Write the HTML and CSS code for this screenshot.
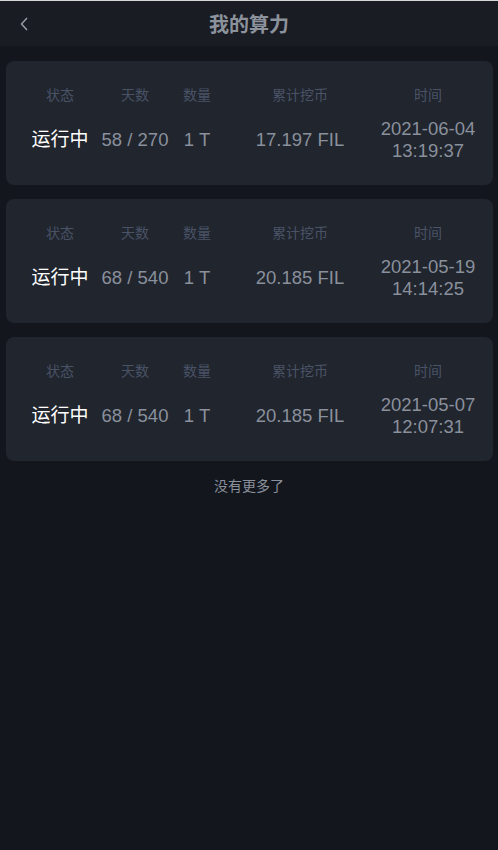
FILE: index.html
```html
<!DOCTYPE html>
<html lang="zh-CN">
<head>
  <meta charset="UTF-8">
  <meta name="viewport" content="width=device-width, initial-scale=1.0">
  <title>我的算力</title>
  <link rel="stylesheet" href="styles.css">
</head>
<body>

  <div class="header">
    <a class="back" href="#">
      <svg width="10" height="16" viewBox="0 0 10 16"><path d="M8 2 L2.5 8 L8 14" fill="none" stroke="#9aa0aa" stroke-width="1.4"/></svg>
    </a>
    <h1>我的算力</h1>
  </div>

  <div class="list">
    <div class="card">
      <div class="label">状态</div>
      <div class="label">天数</div>
      <div class="label">数量</div>
      <div class="label">累计挖币</div>
      <div class="label">时间</div>
      <div class="value status">运行中</div>
      <div class="value">58 / 270</div>
      <div class="value">1 T</div>
      <div class="value">17.197 FIL</div>
      <div class="value">2021-06-04<br>13:19:37</div>
    </div>

    <div class="card">
      <div class="label">状态</div>
      <div class="label">天数</div>
      <div class="label">数量</div>
      <div class="label">累计挖币</div>
      <div class="label">时间</div>
      <div class="value status">运行中</div>
      <div class="value">68 / 540</div>
      <div class="value">1 T</div>
      <div class="value">20.185 FIL</div>
      <div class="value">2021-05-19<br>14:14:25</div>
    </div>

    <div class="card">
      <div class="label">状态</div>
      <div class="label">天数</div>
      <div class="label">数量</div>
      <div class="label">累计挖币</div>
      <div class="label">时间</div>
      <div class="value status">运行中</div>
      <div class="value">68 / 540</div>
      <div class="value">1 T</div>
      <div class="value">20.185 FIL</div>
      <div class="value">2021-05-07<br>12:07:31</div>
    </div>
  </div>

  <p class="no-more">没有更多了</p>

</body>
</html>
```

FILE: styles.css
```css
body {
  margin: 0;
  min-height: 100vh;
  background-color: #13161d;
  font-family: "Liberation Sans", Arial, "Noto Sans CJK SC", sans-serif;
  border-top: 1px solid #d8d8d8;
  box-sizing: border-box;
}

.header {
  height: 45px;
  background-color: #1a1c24;
  display: flex;
  align-items: center;
  justify-content: center;
  position: relative;
}

.header h1 {
  margin: 0;
  font-size: 20px;
  font-weight: bold;
  color: #8c929c;
}

.back {
  position: absolute;
  left: 19px;
  top: 15px;
  display: block;
  line-height: 0;
}

.list {
  padding: 15px 5px 0 6px;
  display: flex;
  flex-direction: column;
  gap: 14px;
}

.card {
  background-color: #20252e;
  border-radius: 8px;
  padding: 24px 0 23px 16px;
  display: grid;
  grid-template-columns: 76px 74px 50px 156px 100px;
  row-gap: 13px;
  align-items: center;
  text-align: center;
}

.label {
  font-size: 14px;
  line-height: 20px;
  color: #4a5366;
}

.value {
  font-size: 18.5px;
  line-height: 22px;
  color: #8a909c;
  white-space: nowrap;
}

.value.status {
  color: #ffffff;
  font-size: 19px;
}

.no-more {
  margin: 16px 0 0;
  text-align: center;
  font-size: 14px;
  line-height: 18px;
  color: #8a909c;
}
```
